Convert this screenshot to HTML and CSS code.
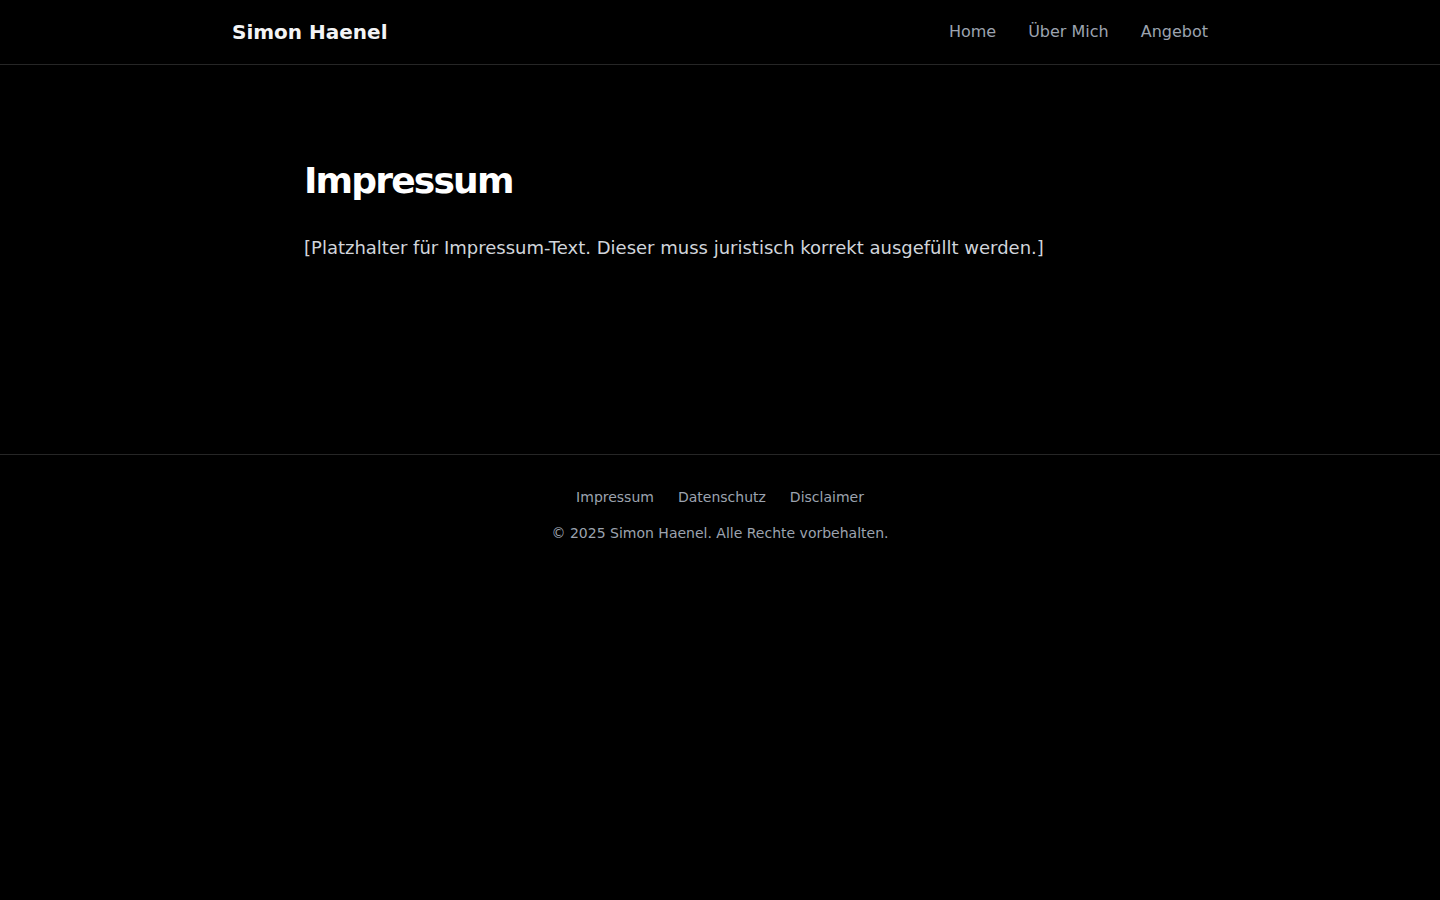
FILE: index.html
```html
<!DOCTYPE html>
<html lang="de">
<head>
<meta charset="utf-8">
<title>Impressum – Simon Haenel</title>
<link rel="stylesheet" href="styles.css">
</head>
<body>
<header class="site-header">
  <div class="header-inner">
    <a class="brand" href="#">Simon Haenel</a>
    <nav class="main-nav">
      <a href="#">Home</a>
      <a href="#">Über Mich</a>
      <a href="#">Angebot</a>
    </nav>
  </div>
</header>
<main class="content">
  <h1 class="title">Impressum</h1>
  <p class="lead">[Platzhalter für Impressum-Text. Dieser muss juristisch korrekt ausgefüllt werden.]</p>
</main>
<footer class="site-footer">
  <nav class="footer-nav">
    <a href="#">Impressum</a>
    <a href="#">Datenschutz</a>
    <a href="#">Disclaimer</a>
  </nav>
  <p class="copyright">© 2025 Simon Haenel. Alle Rechte vorbehalten.</p>
</footer>
</body>
</html>
```
FILE: styles.css
```css
* { box-sizing: border-box; }
html, body { margin: 0; padding: 0; }
body {
  background: #000;
  color: #e5e7eb;
  font-family: "DejaVu Sans", sans-serif;
  min-height: 100vh;
}
a { text-decoration: none; color: inherit; }

.site-header {
  border-bottom: 1px solid #262626;
}
.header-inner {
  max-width: 1024px;
  margin: 0 auto;
  padding: 0 24px;
  height: 64px;
  display: flex;
  align-items: center;
  justify-content: space-between;
}
.brand {
  font-size: 20px;
  line-height: 28px;
  font-weight: bold;
  color: #f3f4f6;
}
.main-nav {
  display: flex;
  gap: 32px;
  font-size: 16px;
  line-height: 24px;
  padding-bottom: 1px;
  color: #9ca3af;
}

.content {
  max-width: 832px;
  margin: 0 auto;
  padding: 96px 0 0;
  min-height: 389px;
}
.title {
  margin: 0 0 33px;
  font-size: 36px;
  line-height: 40px;
  font-weight: bold;
  letter-spacing: -1.8px;
  color: #fff;
}
.lead {
  margin: 0;
  font-size: 18px;
  line-height: 28px;
  color: #d1d5db;
}

.site-footer {
  border-top: 1px solid #262626;
  padding: 32px 0;
  text-align: center;
}
.footer-nav {
  display: flex;
  justify-content: center;
  gap: 24px;
  font-size: 14px;
  line-height: 20px;
  color: #9ca3af;
}
.copyright {
  margin: 16px 0 0;
  font-size: 14px;
  line-height: 20px;
  color: #9ca3af;
}
```
